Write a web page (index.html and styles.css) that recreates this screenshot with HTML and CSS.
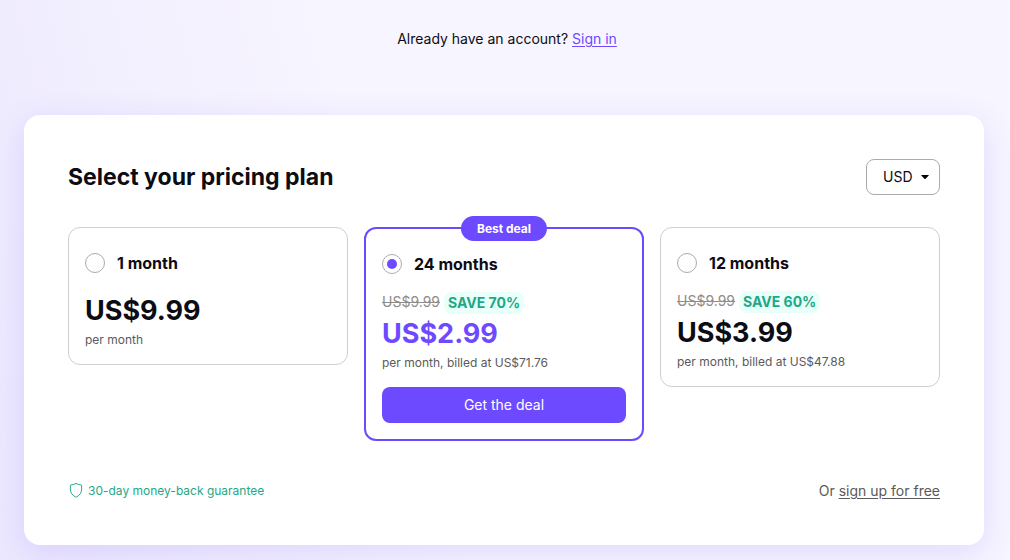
FILE: index.html
```html
<!DOCTYPE html>
<html lang="en">
<head>
    <meta charset="UTF-8">
    <meta name="viewport" content="width=device-width, initial-scale=1.0">
    <title>Select your pricing plan</title>
    <link rel="stylesheet" href="styles.css">
</head>
<body>

    <header class="signin">
        Already have an account? <a href="#">Sign in</a>
    </header>

    <main class="panel">
        <div class="panel-header">
            <h1>Select your pricing plan</h1>
            <div class="currency">
                <select aria-label="Currency">
                    <option>USD</option>
                    <option>EUR</option>
                    <option>CHF</option>
                </select>
                <svg class="caret" viewBox="0 0 8 4" aria-hidden="true"><path d="M.6 0h6.8q.8 0 .3.6L4.6 3.7q-.6.6-1.2 0L.3.6Q-.2 0 .6 0z"/></svg>
            </div>
        </div>

        <form class="plans">
            <div class="plan">
                <label class="plan-name"><input type="radio" name="plan">1 month</label>
                <div class="price">US$9.99</div>
                <div class="billing">per month</div>
            </div>

            <div class="plan selected">
                <span class="best-deal">Best deal</span>
                <label class="plan-name"><input type="radio" name="plan" checked>24 months</label>
                <div class="discount"><s>US$9.99</s><span class="save">SAVE 70%</span></div>
                <div class="price">US$2.99</div>
                <div class="billing">per month, billed at US$71.76</div>
                <button type="button" class="deal-button">Get the deal</button>
            </div>

            <div class="plan">
                <label class="plan-name"><input type="radio" name="plan">12 months</label>
                <div class="discount"><s>US$9.99</s><span class="save">SAVE 60%</span></div>
                <div class="price">US$3.99</div>
                <div class="billing">per month, billed at US$47.88</div>
            </div>
        </form>

        <div class="panel-footer">
            <div class="guarantee">
                <svg class="shield" viewBox="0 1 16 16" aria-hidden="true"><path d="M8 1.500C6.300 2.400 4.600 2.800 2.900 2.900c-.3 0-.5.3-.5.6v3.800c0 3.400 2 6.100 5 7.500q.6.300 1.200 0c3-1.400 5-4.100 5-7.500V3.500c0-.3-.2-.6-.5-.6C11.400 2.800 9.700 2.400 8 1.500z"/></svg>
                <span>30-day money-back guarantee</span>
            </div>
            <div class="free">Or <a href="#">sign up for free</a></div>
        </div>
    </main>

</body>
</html>
```

FILE: styles.css
```css
* {
    box-sizing: border-box;
}

body {
    margin: 0;
    min-height: 100vh;
    padding: 28px 26px 15px 24px;
    font-family: Inter, "Liberation Sans", sans-serif;
    font-size: 14px;
    line-height: 22px;
    color: #0c0c14;
    background: linear-gradient(75deg, #ece8fe 0%, #f7f5ff 40%, #f7f5ff 100%);
}

a {
    text-underline-offset: 2px;
}

.signin {
    text-align: center;
    padding-left: 6px;
}

.signin a {
    color: #6d4aff;
}

.panel {
    max-width: 960px;
    margin: 65px auto 0;
    padding: 44px;
    background: #fff;
    border-radius: 16px;
    box-shadow: 0 8px 32px rgba(109, 74, 255, 0.16);
}

.panel-header {
    display: flex;
    justify-content: space-between;
    align-items: center;
    margin-bottom: 32px;
}

h1 {
    margin: 0;
    font-size: 23px;
    line-height: 36px;
    font-weight: 700;
}

.currency {
    position: relative;
}

.currency select {
    appearance: none;
    display: block;
    width: 74px;
    height: 36px;
    padding: 0 20px 0 16px;
    font: inherit;
    color: inherit;
    background: #fff;
    border: 1px solid #adaba8;
    border-radius: 8px;
}

.caret {
    position: absolute;
    right: 11px;
    top: 16px;
    width: 8px;
    height: 4px;
    pointer-events: none;
}

.plans {
    display: grid;
    grid-template-columns: repeat(3, 1fr);
    gap: 16px;
    align-items: start;
}

.plan {
    position: relative;
    padding: 16px 16px 15px;
    border: 1px solid #d1cfcd;
    border-radius: 12px;
}

.plan.selected {
    padding-bottom: 16px;
    border: 2px solid #6d4aff;
}

.best-deal {
    position: absolute;
    top: -13px;
    left: 50%;
    transform: translateX(-50%);
    padding: 0 16px;
    font-size: 12px;
    line-height: 25px;
    font-weight: 700;
    color: #fff;
    background: #6d4aff;
    border-radius: 13px;
    white-space: nowrap;
}

.plan-name {
    display: flex;
    align-items: center;
    gap: 12px;
    height: 38px;
    margin-bottom: 9px;
    font-size: 16px;
    font-weight: 700;
}

.plan-name input {
    appearance: none;
    display: grid;
    place-items: center;
    width: 20px;
    height: 20px;
    margin: 0;
    background: #fff;
    border: 1px solid #adaba8;
    border-radius: 50%;
}

.plan-name input:checked::before {
    content: '';
    width: 10px;
    height: 10px;
    border-radius: 50%;
    background: #6d4aff;
}

.discount {
    display: flex;
    gap: 4px;
}

.discount s {
    line-height: 20px;
    color: #8f8d8a;
}

.save {
    padding: 0 4px;
    font-weight: 700;
    color: #1ea885;
    background: #e8fffa;
    border-radius: 8px;
}

.price {
    font-size: 27px;
    line-height: 40px;
    font-weight: 700;
}

.selected .price {
    color: #6d4aff;
}

.billing {
    font-size: 12px;
    line-height: 18px;
    color: #5c5958;
}

.deal-button {
    display: block;
    width: 100%;
    height: 36px;
    margin-top: 15px;
    padding: 0;
    font: inherit;
    color: #fff;
    background: #6d4aff;
    border: 0;
    border-radius: 8px;
}

.panel-footer {
    display: flex;
    justify-content: space-between;
    align-items: center;
    margin-top: 40px;
    line-height: 20px;
}

.guarantee {
    display: flex;
    align-items: center;
    gap: 4px;
    font-size: 12px;
    color: #1ea885;
}

.shield {
    width: 16px;
    height: 16px;
    fill: none;
    stroke: #1ea885;
}

.free,
.free a {
    color: #5c5958;
}
```
